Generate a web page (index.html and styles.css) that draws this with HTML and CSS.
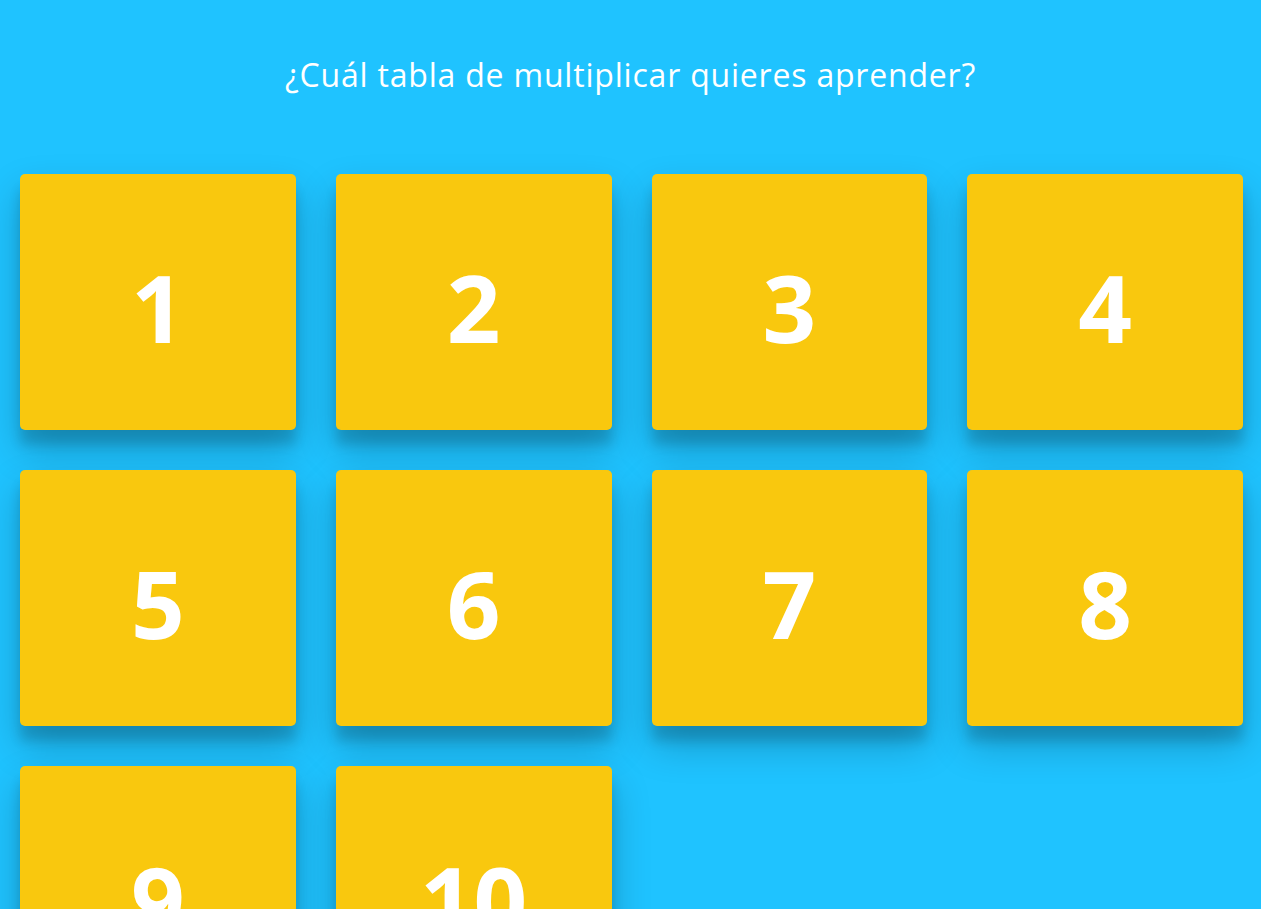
FILE: index.html
```html
<!DOCTYPE html>
<html lang="es">
<head>
<meta charset="utf-8">
<title>Tablas de multiplicar</title>
<link rel="stylesheet" href="styles.css">
</head>
<body>
<header class="title-bar">
  <h1 class="title">¿Cuál tabla de multiplicar quieres aprender?</h1>
</header>
<main class="grid">
  <button class="card">1</button>
  <button class="card">2</button>
  <button class="card">3</button>
  <button class="card">4</button>
  <button class="card">5</button>
  <button class="card">6</button>
  <button class="card">7</button>
  <button class="card">8</button>
  <button class="card">9</button>
  <button class="card">10</button>
</main>
</body>
</html>
```

FILE: styles.css
```css
html, body {
  margin: 0;
  padding: 0;
  background: #1fc3ff;
  font-family: "Open Sans", "Noto Sans", "DejaVu Sans", sans-serif;
}
.title-bar {
  height: 174px;
  display: flex;
  justify-content: center;
  padding-top: 52px;
  box-sizing: border-box;
}
.title {
  margin: 0;
  color: #fff;
  font-weight: 400;
  font-size: 32px;
  line-height: 46px;
  letter-spacing: 0.8px;
}
.grid {
  display: grid;
  grid-template-columns: repeat(4, 1fr);
  grid-auto-rows: 256px;
  gap: 40px;
  padding: 0 18px 40px 20px;
}
.card {
  border: none;
  border-radius: 5px;
  background: #f9c80e;
  color: #fff;
  font-family: "Open Sans", "Noto Sans", sans-serif;
  font-weight: 700;
  font-size: 94px;
  line-height: 1;
  padding-top: 10px;
  box-shadow: 0 19px 38px rgba(0, 0, 0, 0.22), 0 15px 12px rgba(0, 0, 0, 0.14);
  cursor: pointer;
}
```
